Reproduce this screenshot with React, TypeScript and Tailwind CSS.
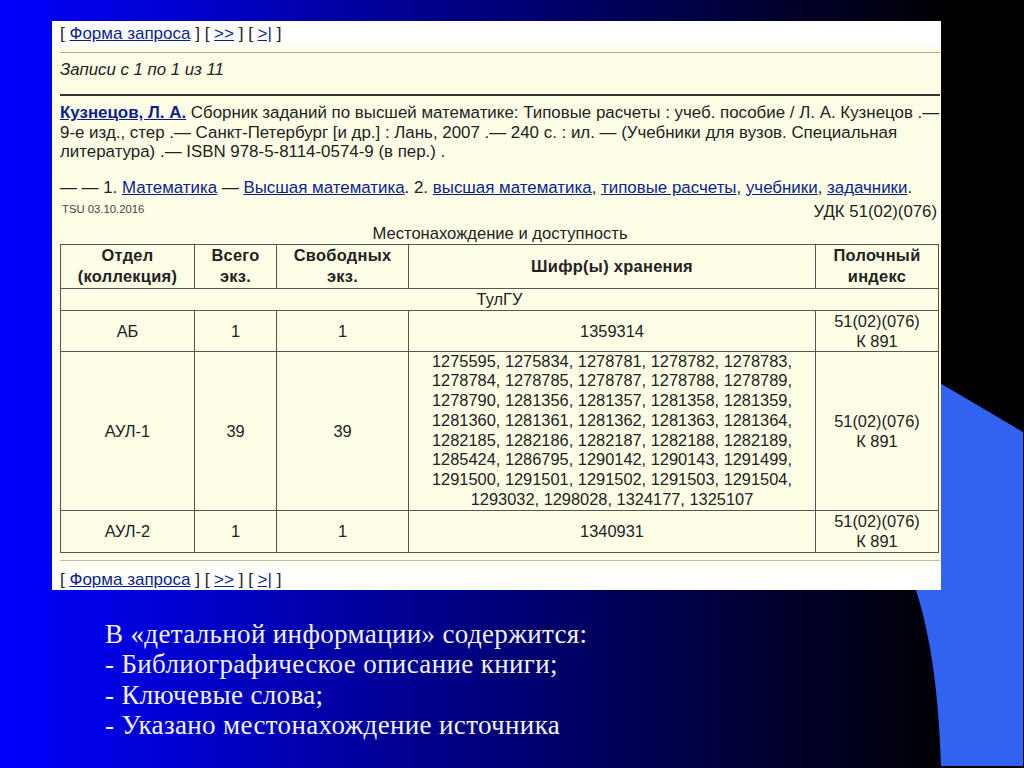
const linkClass = 'text-[#0b1f8f] underline';

const Nav = () => (
  <div className="text-[17px] leading-[18px] text-[#222]">
    [ <a className={linkClass}>Форма запроса</a> ] [ <a className={linkClass}>&gt;&gt;</a> ] [ <a className={linkClass}>&gt;|</a> ]
  </div>
);

const cell = 'border border-[#555] text-center align-middle p-0';
const headCell = 'border border-[#555] text-center align-middle p-0 font-bold tracking-[0.3px] leading-[21px]';
const shelf = (
  <>
    51(02)(076)
    <br />К 891
  </>
);

const App = () => {
  return (
    <div className="relative w-[1024px] h-[768px] overflow-hidden bg-[linear-gradient(90deg,#0000ff_0%,#000000_93%)] font-['Liberation_Sans',sans-serif]">
      {/* decorative shape behind the panel */}
      <svg className="absolute left-0 top-0" width="1024" height="768" viewBox="0 0 1024 768">
        <path d="M938 382 L1023 432 L1023 766 L941 766 C939 700 932 640 916 590 Z" fill="#3263f0" />
      </svg>

      <div className="relative pt-[21px] pl-[52px]">
        <div className="w-[889px] h-[569px] flex flex-col pl-2 pr-[1px] bg-[linear-gradient(180deg,#ffffff_0px,#ffffff_22px,#fefee6_30px,#fefee6_538px,#ffffff_550px)] text-[#222]">
          <div className="pt-[4px]">
            <Nav />
          </div>
          <div className="mt-[9px] h-[1px] bg-[#aaa]" />
          <div className="mt-[8px] italic text-[16.8px] leading-[18px]">Записи с 1 по 1 из 11</div>
          <div className="mt-[15px] h-[2px] bg-[#333]" />
          <div className="mt-[7px] text-[16.9px] leading-[19.5px] whitespace-nowrap">
            <a className={`${linkClass} font-bold`}>Кузнецов, Л. А.</a> Сборник заданий по высшей математике: Типовые расчеты : учеб. пособие / Л. А. Кузнецов .—
            <br />
            9-е изд., стер .— Санкт-Петербург [и др.] : Лань, 2007 .— 240 с. : ил. — (Учебники для вузов. Специальная
            <br />
            литература) .— ISBN 978-5-8114-0574-9 (в пер.) .
          </div>
          <div className="mt-[16px] text-[16.9px] leading-[19px] whitespace-nowrap">
            — — 1. <a className={linkClass}>Математика</a> — <a className={linkClass}>Высшая математика</a>. 2. <a className={linkClass}>высшая математика</a>, <a className={linkClass}>типовые расчеты</a>, <a className={linkClass}>учебники</a>, <a className={linkClass}>задачники</a>.
          </div>
          <div className="flex justify-between items-start h-[25px] mt-[3px]">
            <span className="ml-[2px] mt-[2px] text-[11.3px] leading-[14px] text-[#444]">TSU 03.10.2016</span>
            <span className="mr-[3px] mt-[3px] text-[16.8px] leading-[18px]">УДК 51(02)(076)</span>
          </div>
          <div className="text-center text-[16.6px] leading-[18px] mb-[1px]">Местонахождение и доступность</div>

          <table className="w-[878px] table-fixed border-collapse text-[16.4px] leading-[20px] bg-[#fefee6]">
            <colgroup>
              <col className="w-[134px]" />
              <col className="w-[82px]" />
              <col className="w-[132px]" />
              <col className="w-[407px]" />
              <col className="w-[123px]" />
            </colgroup>
            <tbody>
              <tr className="h-[44px]">
                <td className={headCell}>Отдел<br />(коллекция)</td>
                <td className={headCell}>Всего<br />экз.</td>
                <td className={headCell}>Свободных<br />экз.</td>
                <td className={headCell}>Шифр(ы) хранения</td>
                <td className={headCell}>Полочный<br />индекс</td>
              </tr>
              <tr className="h-[22px]">
                <td className={cell} colSpan={5}>ТулГУ</td>
              </tr>
              <tr className="h-[41px]">
                <td className={cell}>АБ</td>
                <td className={cell}>1</td>
                <td className={cell}>1</td>
                <td className={cell}>1359314</td>
                <td className={cell}>{shelf}</td>
              </tr>
              <tr className="h-[159px]">
                <td className={cell}>АУЛ-1</td>
                <td className={cell}>39</td>
                <td className={cell}>39</td>
                <td className={cell}>
                  <div className="leading-[19.7px]">
                    1275595, 1275834, 1278781, 1278782, 1278783,<br />
                    1278784, 1278785, 1278787, 1278788, 1278789,<br />
                    1278790, 1281356, 1281357, 1281358, 1281359,<br />
                    1281360, 1281361, 1281362, 1281363, 1281364,<br />
                    1282185, 1282186, 1282187, 1282188, 1282189,<br />
                    1285424, 1286795, 1290142, 1290143, 1291499,<br />
                    1291500, 1291501, 1291502, 1291503, 1291504,<br />
                    1293032, 1298028, 1324177, 1325107
                  </div>
                </td>
                <td className={cell}>{shelf}</td>
              </tr>
              <tr className="h-[42px]">
                <td className={cell}>АУЛ-2</td>
                <td className={cell}>1</td>
                <td className={cell}>1</td>
                <td className={cell}>1340931</td>
                <td className={cell}>{shelf}</td>
              </tr>
            </tbody>
          </table>

          <div className="mt-[7px] h-[1px] bg-[#bbb]" />
          <div className="mt-[10px]">
            <Nav />
          </div>
        </div>
      </div>

      <div className="relative mt-[29px] ml-[105px] font-['Liberation_Serif',serif] text-[27px] leading-[30.3px] tracking-[0.35px] text-[#f2f2ff]">
        В «детальной информации» содержится:
        <br />- Библиографическое описание книги;
        <br />- Ключевые слова;
        <br />- Указано местонахождение источника
      </div>
    </div>
  );
};

export default App;
